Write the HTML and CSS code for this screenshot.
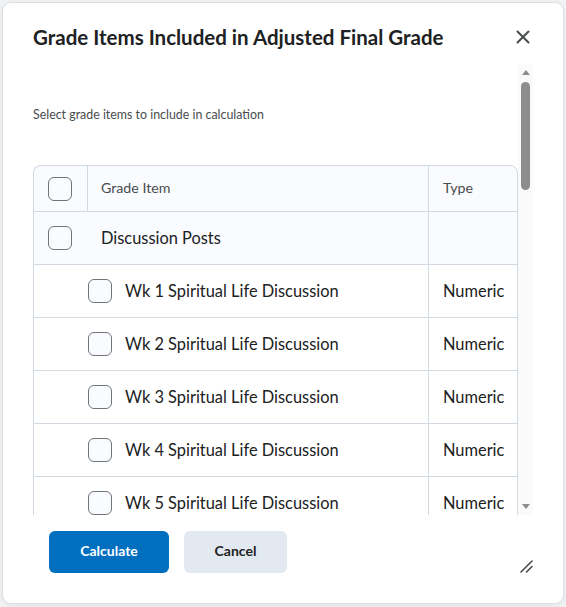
FILE: index.html
```html
<!DOCTYPE html>
<html lang="en">
<head>
<meta charset="utf-8">
<title>Grade Items Included in Adjusted Final Grade</title>
<link rel="stylesheet" href="styles.css">
</head>
<body>
<div class="dialog" role="dialog" aria-labelledby="dlg-title">
  <div class="dialog-header">
    <h2 id="dlg-title" class="dialog-title">Grade Items Included in Adjusted Final Grade</h2>
    <button class="close-btn" aria-label="Close">
      <svg width="14" height="14" viewBox="0 0 14 14" aria-hidden="true"><path d="M1.5 1.5 L12.5 12.5 M12.5 1.5 L1.5 12.5" stroke="#494c4e" stroke-width="2" stroke-linecap="round" fill="none"/></svg>
    </button>
  </div>
  <div class="dialog-body">
    <div class="scroll-content">
      <p class="instructions">Select grade items to include in calculation</p>
      <table class="grade-table">
        <colgroup><col class="col-check"><col><col class="col-type"></colgroup>
        <thead>
          <tr>
            <th class="cell-check"><span class="checkbox"></span></th>
            <th class="cell-name">Grade Item</th>
            <th class="cell-type">Type</th>
          </tr>
        </thead>
        <tbody>
          <tr class="group-row">
            <td class="cell-check"><span class="checkbox"></span></td>
            <td class="cell-name">Discussion Posts</td>
            <td class="cell-type"></td>
          </tr>
          <tr class="item-row"><td colspan="2" class="cell-item"><span class="checkbox"></span><span class="item-label">Wk 1 Spiritual Life Discussion</span></td><td class="cell-type">Numeric</td></tr>
          <tr class="item-row"><td colspan="2" class="cell-item"><span class="checkbox"></span><span class="item-label">Wk 2 Spiritual Life Discussion</span></td><td class="cell-type">Numeric</td></tr>
          <tr class="item-row"><td colspan="2" class="cell-item"><span class="checkbox"></span><span class="item-label">Wk 3 Spiritual Life Discussion</span></td><td class="cell-type">Numeric</td></tr>
          <tr class="item-row"><td colspan="2" class="cell-item"><span class="checkbox"></span><span class="item-label">Wk 4 Spiritual Life Discussion</span></td><td class="cell-type">Numeric</td></tr>
          <tr class="item-row"><td colspan="2" class="cell-item"><span class="checkbox"></span><span class="item-label">Wk 5 Spiritual Life Discussion</span></td><td class="cell-type">Numeric</td></tr>
        </tbody>
      </table>
    </div>
    <div class="scrollbar" aria-hidden="true">
      <span class="sb-arrow sb-up"></span>
      <span class="sb-thumb"></span>
      <span class="sb-space"></span>
      <span class="sb-arrow sb-down"></span>
    </div>
  </div>
  <div class="dialog-footer">
    <button class="btn btn-primary">Calculate</button>
    <button class="btn btn-secondary">Cancel</button>
  </div>
  <svg class="resize-handle" width="14" height="14" viewBox="0 0 14 14" aria-hidden="true">
    <path d="M2 13 L13 2 M7.5 13 L13 7.5" stroke="#494c4e" stroke-width="1.6" stroke-linecap="round" fill="none"/>
  </svg>
</div>
</body>
</html>
```
FILE: styles.css
```css
* { box-sizing: border-box; }

html, body {
  margin: 0;
  height: 100%;
}

body {
  background: #f1f3f5;
  padding: 3px 0 0 3px;
  font-family: Lato, "Noto Sans", "Liberation Sans", sans-serif;
  color: #202122;
}

.dialog {
  position: relative;
  width: 560px;
  height: 600px;
  background: #ffffff;
  border-radius: 8px;
  box-shadow: 0 0 0 1px #dcdfe3, 0 2px 8px rgba(0, 0, 0, 0.08);
  display: flex;
  flex-direction: column;
}

.dialog-header {
  display: flex;
  align-items: center;
  justify-content: space-between;
  padding: 20px 30px 13px 30px;
}

.dialog-title {
  margin: 0;
  font-size: 20.5px;
  line-height: 28px;
  font-weight: 700;
  color: #202122;
}

.close-btn {
  width: 28px;
  height: 28px;
  margin-right: -4px;
  padding: 0;
  border: none;
  background: transparent;
  display: flex;
  align-items: center;
  justify-content: center;
}

.dialog-body {
  flex: none;
  height: 451px;
  margin: 0 30px;
  display: flex;
}

.scroll-content {
  flex: 1;
  min-width: 0;
  overflow: hidden;
}

.scrollbar {
  flex: none;
  width: 15px;
  background: #fafafa;
  display: flex;
  flex-direction: column;
  align-items: center;
  padding: 6px 0;
}

.sb-arrow {
  width: 0;
  height: 0;
  border-left: 4px solid transparent;
  border-right: 4px solid transparent;
}

.sb-up { border-bottom: 5px solid #8d8d8d; }
.sb-down { border-top: 5px solid #8d8d8d; }

.sb-thumb {
  width: 9px;
  height: 108px;
  margin-top: 7px;
  border-radius: 5px;
  background: #8d8d8d;
}

.sb-space { flex: 1; }

.instructions {
  margin: 42px 0 41px 0;
  font-size: 12.4px;
  line-height: 18px;
  color: #494c4e;
}

.grade-table {
  width: 100%;
  table-layout: fixed;
  border-collapse: separate;
  border-spacing: 0;
}

.col-check { width: 54px; }
.col-type { width: 90px; }

.grade-table th,
.grade-table td {
  padding: 0 0 2px 0;
  text-align: left;
  vertical-align: middle;
  border-bottom: 1px solid #d3d9e3;
  white-space: nowrap;
}

.grade-table th {
  height: 47px;
  background: #f9fbff;
  border-top: 1px solid #d3d9e3;
  font-size: 14.2px;
  font-weight: 400;
  color: #494c4e;
}

.grade-table th:first-child { border-top-left-radius: 8px; }
.grade-table th:last-child { border-top-right-radius: 8px; }

.grade-table tr > :first-child { border-left: 1px solid #d3d9e3; }
.grade-table tr > :last-child { border-right: 1px solid #d3d9e3; }

.grade-table th.cell-name { border-left: 1px solid #d3d9e3; }

.grade-table .cell-type {
  border-left: 1px solid #d3d9e3;
  padding-left: 14px;
}

.grade-table .cell-check { padding-left: 14px; padding-bottom: 0; }

.cell-check .checkbox { display: block; }

.grade-table .cell-name { padding-left: 13px; }

.group-row td {
  height: 53px;
  background: #f9fbff;
  font-size: 16.4px;
}

.grade-table .group-row .cell-name { padding-left: 14px; }

.item-row td {
  height: 53px;
  font-size: 16.4px;
  background: #ffffff;
}

.grade-table .cell-item { padding-left: 54px; }

.cell-item .checkbox {
  display: inline-block;
  vertical-align: middle;
  position: relative;
  top: 1px;
}

.item-label {
  display: inline-block;
  vertical-align: middle;
  margin-left: 13px;
  color: #202122;
}

.cell-type { color: #202122; }

.grade-table th.cell-type { color: #494c4e; }

.checkbox {
  width: 24px;
  height: 24px;
  border: 1px solid #6e7477;
  border-radius: 6px;
  background: #f9fbff;
}

.dialog-footer {
  display: flex;
  gap: 15px;
  padding: 16px 30px 0 46px;
}

.btn {
  height: 42px;
  border: none;
  border-radius: 6px;
  font-family: Lato, "Noto Sans", "Liberation Sans", sans-serif;
  font-size: 14px;
  line-height: 18px;
  font-weight: 700;
  padding: 0 0 3px 0;
}

.btn-primary {
  width: 120px;
  background: #006fbf;
  color: #ffffff;
}

.btn-secondary {
  width: 103px;
  background: #e3e9f1;
  color: #202122;
}

.resize-handle {
  position: absolute;
  right: 30px;
  bottom: 30px;
}
```
